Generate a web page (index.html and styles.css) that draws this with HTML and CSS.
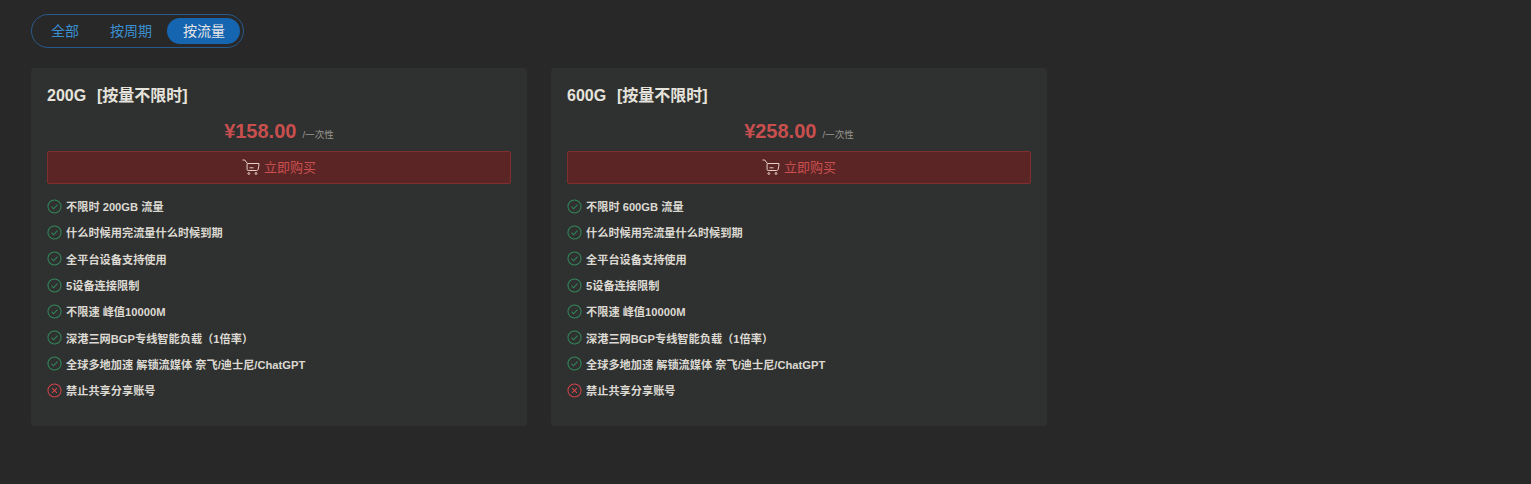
FILE: index.html
```html
<!DOCTYPE html>
<html lang="zh-CN">
<head>
    <meta charset="UTF-8">
    <title>Plans</title>
    <link rel="stylesheet" href="styles.css">
</head>
<body>
    <main class="page">
        <div class="tabs">
            <span class="tab">全部</span>
            <span class="tab">按周期</span>
            <span class="tab active">按流量</span>
        </div>
        <div class="plans">
            <section class="card">
                <h3 class="title">200G &nbsp;[按量不限时]</h3>
                <div class="price"><b>¥158.00</b><small>/一次性</small></div>
                <button class="buy">
                    <svg class="cart" viewBox="0 0 18 16"><path d="M.5 1h2.200l2.800 3.500h11.500c-.1 2.400-.4 4.200-.9 6-.2.7-.7 1-1.400 1H6.200c-.7 0-1.100-.4-1.100-1.100V4.500"/><path d="M7.500 8.800h4"/><circle cx="6.800" cy="14.500" r=".9"/><circle cx="14" cy="14.500" r=".9"/></svg>
                    立即购买
                </button>
                <ul class="features">
                    <li><svg class="ok" viewBox="0 0 16 16"><circle cx="8" cy="8" r="7"/><path d="M4.800 8.200l2.200 2.200 4.200-4.400"/></svg>不限时 200GB 流量</li>
                    <li><svg class="ok" viewBox="0 0 16 16"><circle cx="8" cy="8" r="7"/><path d="M4.800 8.200l2.200 2.200 4.200-4.400"/></svg>什么时候用完流量什么时候到期</li>
                    <li><svg class="ok" viewBox="0 0 16 16"><circle cx="8" cy="8" r="7"/><path d="M4.800 8.200l2.200 2.200 4.200-4.400"/></svg>全平台设备支持使用</li>
                    <li><svg class="ok" viewBox="0 0 16 16"><circle cx="8" cy="8" r="7"/><path d="M4.800 8.200l2.200 2.200 4.200-4.400"/></svg>5设备连接限制</li>
                    <li><svg class="ok" viewBox="0 0 16 16"><circle cx="8" cy="8" r="7"/><path d="M4.800 8.200l2.200 2.200 4.200-4.400"/></svg>不限速 峰值10000M</li>
                    <li><svg class="ok" viewBox="0 0 16 16"><circle cx="8" cy="8" r="7"/><path d="M4.800 8.200l2.200 2.200 4.200-4.400"/></svg>深港三网BGP专线智能负载（1倍率）</li>
                    <li><svg class="ok" viewBox="0 0 16 16"><circle cx="8" cy="8" r="7"/><path d="M4.800 8.200l2.200 2.200 4.200-4.400"/></svg>全球多地加速 解锁流媒体 奈飞/迪士尼/ChatGPT</li>
                    <li><svg class="no" viewBox="0 0 16 16"><circle cx="8" cy="8" r="7"/><path d="M5.400 5.400l5.200 5.200M10.600 5.400l-5.200 5.200"/></svg>禁止共享分享账号</li>
                </ul>
            </section>
            <section class="card">
                <h3 class="title">600G &nbsp;[按量不限时]</h3>
                <div class="price"><b>¥258.00</b><small>/一次性</small></div>
                <button class="buy">
                    <svg class="cart" viewBox="0 0 18 16"><path d="M.5 1h2.200l2.800 3.500h11.500c-.1 2.400-.4 4.200-.9 6-.2.7-.7 1-1.400 1H6.200c-.7 0-1.100-.4-1.100-1.100V4.500"/><path d="M7.500 8.800h4"/><circle cx="6.800" cy="14.500" r=".9"/><circle cx="14" cy="14.500" r=".9"/></svg>
                    立即购买
                </button>
                <ul class="features">
                    <li><svg class="ok" viewBox="0 0 16 16"><circle cx="8" cy="8" r="7"/><path d="M4.800 8.200l2.200 2.200 4.200-4.400"/></svg>不限时 600GB 流量</li>
                    <li><svg class="ok" viewBox="0 0 16 16"><circle cx="8" cy="8" r="7"/><path d="M4.800 8.200l2.200 2.200 4.200-4.400"/></svg>什么时候用完流量什么时候到期</li>
                    <li><svg class="ok" viewBox="0 0 16 16"><circle cx="8" cy="8" r="7"/><path d="M4.800 8.200l2.200 2.200 4.200-4.400"/></svg>全平台设备支持使用</li>
                    <li><svg class="ok" viewBox="0 0 16 16"><circle cx="8" cy="8" r="7"/><path d="M4.800 8.200l2.200 2.200 4.200-4.400"/></svg>5设备连接限制</li>
                    <li><svg class="ok" viewBox="0 0 16 16"><circle cx="8" cy="8" r="7"/><path d="M4.800 8.200l2.200 2.200 4.200-4.400"/></svg>不限速 峰值10000M</li>
                    <li><svg class="ok" viewBox="0 0 16 16"><circle cx="8" cy="8" r="7"/><path d="M4.800 8.200l2.200 2.200 4.200-4.400"/></svg>深港三网BGP专线智能负载（1倍率）</li>
                    <li><svg class="ok" viewBox="0 0 16 16"><circle cx="8" cy="8" r="7"/><path d="M4.800 8.200l2.200 2.200 4.200-4.400"/></svg>全球多地加速 解锁流媒体 奈飞/迪士尼/ChatGPT</li>
                    <li><svg class="no" viewBox="0 0 16 16"><circle cx="8" cy="8" r="7"/><path d="M5.400 5.400l5.200 5.200M10.600 5.400l-5.200 5.200"/></svg>禁止共享分享账号</li>
                </ul>
            </section>
        </div>
    </main>
</body>
</html>
```

FILE: styles.css
```css
* {
    box-sizing: border-box;
}
body {
    margin: 0;
    background: #282828;
    font-family: "Liberation Sans", "Noto Sans CJK SC", sans-serif;
    color: #e6e3dc;
}
.page {
    padding: 14px 31px;
}
.tabs {
    display: inline-flex;
    align-items: center;
    height: 34px;
    padding: 0 2.5px 0 3.5px;
    border: 1px solid #285a8c;
    border-radius: 17px;
}
.tab {
    padding: 0 15.5px;
    height: 26px;
    line-height: 26px;
    font-size: 14px;
    color: #3a8fd1;
    border-radius: 13px;
}
.tab.active {
    margin-left: -.5px;
    padding: 0 15px 0 16px;
    background: #1665b0;
    color: #e6e6e6;
}
.plans {
    display: flex;
    gap: 24px;
    margin-top: 20px;
}
.card {
    width: 496px;
    height: 358px;
    padding: 17px 16px 16px;
    background: #2f3130;
    border-radius: 4px;
}
.title {
    margin: 0;
    font-size: 16px;
    line-height: 22px;
    font-weight: 700;
    word-spacing: 1px;
}
.price {
    display: flex;
    justify-content: center;
    align-items: baseline;
    margin-top: 13px;
    height: 31px;
}
.price b {
    font-size: 20px;
    color: #c94f4f;
}
.price small {
    margin-left: 6px;
    font-size: 9.6px;
    color: #9a9790;
}
.buy {
    display: flex;
    align-items: center;
    justify-content: center;
    width: 464px;
    height: 33px;
    padding: 0 0 2px;
    background: #5c2525;
    border: 1px solid #7f2f2f;
    border-radius: 2px;
    color: #c94f4f;
    font-family: inherit;
    font-size: 13px;
}
.cart {
    width: 18px;
    height: 16px;
    margin-right: 4px;
    fill: none;
    stroke: #e6cfc8;
    stroke-width: 1;
}
.features {
    list-style: none;
    margin: 9px 0 0;
    padding: 0;
}
.features li {
    display: flex;
    align-items: center;
    height: 26.3px;
    font-size: 11.2px;
    font-weight: 700;
    color: #dcd9d2;
}
.features svg {
    width: 15px;
    height: 15px;
    margin-right: 4px;
    fill: none;
    stroke-width: 1.1;
    flex: none;
}
.ok {
    stroke: #33875a;
}
.no {
    stroke: #d0434b;
}
```
